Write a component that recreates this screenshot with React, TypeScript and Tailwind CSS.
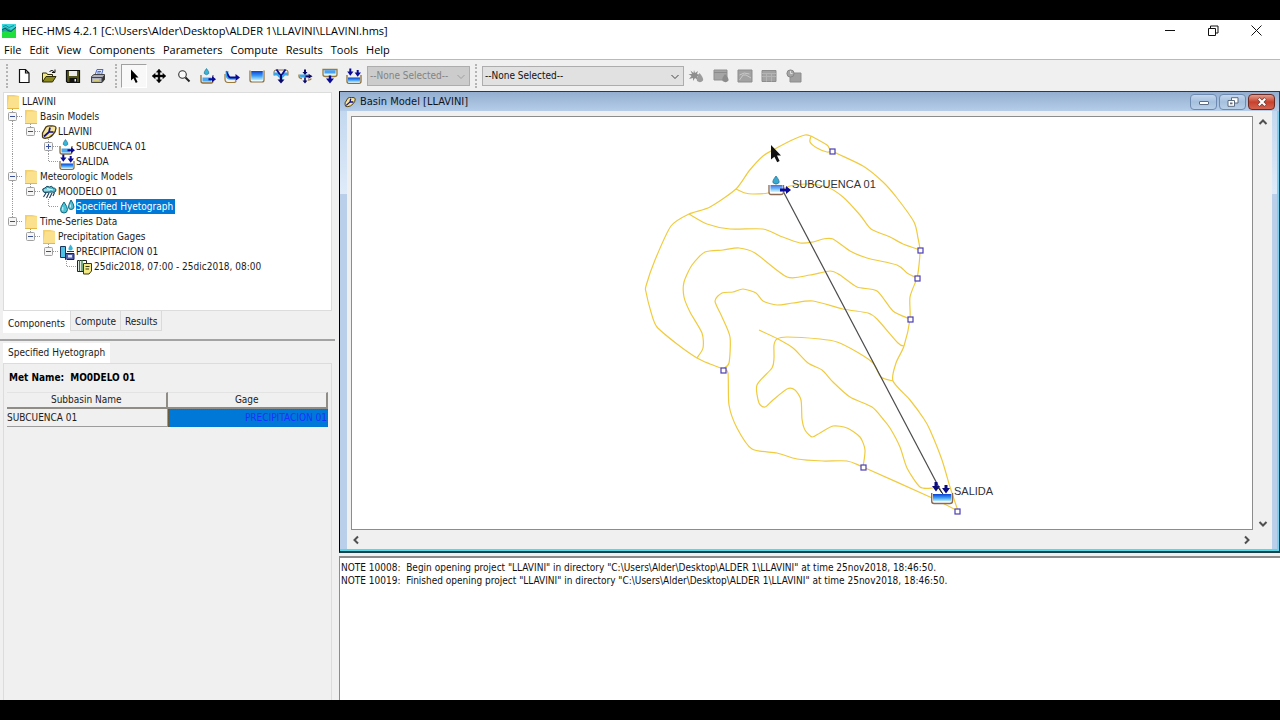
import type { ReactNode } from "react";

type Point = [number, number];

/* ---------- icons ---------- */

function Svg({ children, className = "h-4 w-4" }: { children: ReactNode; className?: string }) {
  return (
    <svg viewBox="0 0 16 16" className={className + " shrink-0"} aria-hidden="true">
      {children}
    </svg>
  );
}

function SubbasinGlyph() {
  return (
    <>
      <path d="M1 7V13Q1 15 3 15H11.500Q13 15 13 13V7" fill="none" stroke="#8a6d3b" strokeWidth="1.300" />
      <path d="M2.500 9.500H11.500V13.500H2.500Z" fill="#4aa8f0" />
      <path d="M6.500 0.500Q9.500 4 8.800 5.500Q6.500 8 4.200 5.500Q3.600 4 6.500 0.500Z" fill="#38b6d8" stroke="#1b6f96" strokeWidth="0.600" />
      <path d="M8.500 10.200H12V8L16 11.200L12 14.300V12.200H8.500Z" fill="#0a0a96" />
    </>
  );
}

function SinkGlyph() {
  return (
    <>
      <path d="M1 7V13.500Q1 15.300 3 15.300H13Q15 15.300 15 13.500V7" fill="none" stroke="#8a6d3b" strokeWidth="1.300" />
      <path d="M2 9.500H14V14.500H2Z" fill="url(#water)" />
      <path d="M3.300 0.500H5.300V3.500H7.500L4.300 7.800L1.200 3.500H3.300ZM10.700 2H12.700V4.500H15L11.700 8.800L8.600 4.500H10.700Z" fill="#0a0a96" />
    </>
  );
}

function Folder() {
  return (
    <Svg>
      <path d="M2 1H9L14 2V15H2Z" fill="#f2d06c" />
      <path d="M4 2.500H14V15H2Z" fill="#fbe08d" />
      <path d="M2 14.500H14" stroke="#e3b94b" />
    </Svg>
  );
}

function BasinModelIcon({ className }: { className?: string }) {
  return (
    <Svg className={className}>
      <path d="M1.500 9L5 3Q7 1.500 10 2Q15 1.500 15 4Q14.800 8 12 10.500Q9 14 5 14.200Q1 14.500 1.500 11.500Z" fill="#f7e69a" stroke="#4b3a12" strokeWidth="1.300" />
      <path d="M3 12.500L8 8L9 3.500M8 8L12.500 8" fill="none" stroke="#10108c" strokeWidth="1.700" />
    </Svg>
  );
}

function StormIcon() {
  return (
    <Svg>
      <path d="M2 7Q0.500 4.500 4 4Q5.500 1 8.500 3Q11 1 12 4Q16 4 14.500 7.500Q13 9 11 8L4 8.500Q2.500 8.500 2 7Z" fill="#4fb7c9" stroke="#17495e" />
      <path d="M3 6H9M6 4.500L12 6" stroke="#e4fbff" />
      <path d="M5 9L2.500 13M8 9L5.500 14M11 9L8.500 14M13.500 8.500L12 12" stroke="#17375e" strokeWidth="1.100" />
    </Svg>
  );
}

function DropsIcon() {
  return (
    <Svg>
      <path d="M5 3Q8.500 8 8.500 10.500Q8.300 14 5 14Q1.500 14 1.500 10.500Q1.500 8 5 3Z" fill="#4fc3d6" stroke="#156a80" />
      <path d="M12 1Q15 5.500 15 8Q14.700 10.500 12 10.500Q9.500 10.500 9.500 8Q9.500 5.500 12 1Z" fill="#4fc3d6" stroke="#156a80" />
      <path d="M3.800 8V11.500M11.300 5.500V8.500" stroke="#e4fbff" />
    </Svg>
  );
}

function GageIcon() {
  return (
    <Svg>
      <path d="M1.500 2.500H6.500V13.500H1.500Z" fill="#4fc3e6" stroke="#17375e" />
      <path d="M6.500 9.500H15V15.500H6.500Z" fill="#5560a8" stroke="#17205e" />
      <path d="M9 11H13V13.500H9Z" fill="#dfe6ff" />
      <path d="M11.500 0.500Q14.500 4 13.500 5.500Q11.500 7.500 9.500 5.500Q9 4 11.500 0.500Z" fill="#38b6d8" />
      <path d="M8 7.500H15" stroke="#17375e" />
    </Svg>
  );
}

function TimeWindowIcon() {
  return (
    <Svg>
      <path d="M0.500 1.500H9.500V12.500H0.500Z" fill="#ffffff" stroke="#222" />
      <path d="M2.500 1V12M5 1V12" stroke="#2f7d3a" strokeWidth="1.300" />
      <path d="M6.500 4.500H14.500V12L12 15H6.500Z" fill="#f3ea86" stroke="#3b3710" />
      <path d="M8.500 7.500H12.500M8.500 10H12" stroke="#3b3710" />
    </Svg>
  );
}

const toolIcons: Record<string, ReactNode> = {
  New: <path d="M3.500 1.500H9.500L13 5V14.500H3.500ZM9.500 1.500V5H13" fill="#fff" stroke="#111" strokeWidth="1.200" />,
  Open: (
    <>
      <path d="M1.500 14V5H5.500L6.500 6.500H11.500V9" fill="#f3ea86" stroke="#2d2b08" />
      <path d="M1.500 14L5 8.500H15L11.500 14Z" fill="#8d8a1f" stroke="#2d2b08" />
      <path d="M8.500 3.500Q11 1 13.500 4M14 1.500V4.500H11" fill="none" stroke="#111" />
    </>
  ),
  Save: (
    <>
      <path d="M1.500 2.500H14.500V14.500H2.500L1.500 13.500Z" fill="#55561c" stroke="#111" strokeWidth="1.200" />
      <path d="M4 3H12V8H4Z" fill="#ececec" />
      <path d="M4.500 10H12V14H4.500Z" fill="#111" />
      <path d="M9.500 11H11V13.500H9.500Z" fill="#ececec" />
    </>
  ),
  Print: (
    <>
      <path d="M5 7L7 1.500H13L11.500 7Z" fill="#dfe8ff" stroke="#4f6ac0" />
      <path d="M1.500 8.500L4 6.500H14.500V11.500L12 14.500H1.500Z" fill="#aeb0bd" stroke="#444" />
      <path d="M12 9.500L14.500 7V11.500L12 14.500Z" fill="#333" />
      <path d="M1.500 9.500H12V14" fill="none" stroke="#444" />
      <path d="M3 12H9" stroke="#e6d94d" strokeWidth="1.300" />
      <path d="M7.500 3.500H11M7 5H10.500" stroke="#4f70c7" />
    </>
  ),
  Select: <path d="M5 1.500V12.500L7.500 10.300L9.800 15L11.600 14.100L9.400 9.600H12.500Z" fill="#000" />,
  Pan: <path d="M8 1L10.700 4.200H8.900V7.100H11.800V5.300L15 8L11.800 10.700V8.900H8.900V11.800H10.700L8 15L5.300 11.800H7.100V8.900H4.200V10.700L1 8L4.200 5.300V7.100H7.100V4.200H5.300Z" fill="#000" stroke="#000" strokeWidth="0.400" />,
  Zoom: (
    <>
      <circle cx="6.500" cy="6.500" r="3.800" fill="#fafafa" stroke="#333" strokeWidth="1.100" />
      <path d="M9.500 9.500L13.500 13.500" stroke="#222" strokeWidth="2" />
    </>
  ),
  Subbasin: <SubbasinGlyph />,
  Reach: (
    <>
      <path d="M1 6V11Q1 14.500 4 14.500H9.500Q12 14.500 12 13" fill="none" stroke="#9a7b3c" strokeWidth="1.200" />
      <path d="M3 3V7.500Q3.500 10.500 7.500 10.300H11" fill="none" stroke="#38a6e8" strokeWidth="2.800" />
      <path d="M2.500 2.500L6 8.500H11.500V6L16 9.500L11.500 13V10.500H6Q2.500 9 2.500 2.500Z" fill="#0a0a96" />
    </>
  ),
  Reservoir: (
    <>
      <path d="M1 2.500V12Q1 14 3 14H13Q15 14 15 12V2.500" fill="#fff" stroke="#8a6d3b" strokeWidth="1.200" />
      <path d="M2.200 3H13.800V12.500H2.200Z" fill="url(#water)" />
    </>
  ),
  Junction: (
    <>
      <path d="M1 7.500V4Q1 2 3 2H13Q15 2 15 4V7.500" fill="none" stroke="#8a6d3b" />
      <path d="M1 4.500H5L8 7.500L11 4.500H15V7.500H12L9.500 10V12H6.500V10L4 7.500H1Z" fill="#38a6e8" />
      <path d="M3.500 1.500L7 6.500M12.500 1.500L9 6.500" stroke="#0a0a96" strokeWidth="1.800" />
      <path d="M7 6H9V11.500H11.500L8 15.500L4.500 11.500H7Z" fill="#0a0a66" />
    </>
  ),
  Diversion: (
    <>
      <path d="M2 6.500V8Q2 10.500 5 10.500M14 10.500Q14 12 11 12" fill="none" stroke="#9a7b3c" strokeWidth="1.300" />
      <path d="M2.500 6.500H11V9.500H3.500Z" fill="#38a6e8" />
      <path d="M7 1.500H9V4L10.500 4L8 7L5.500 4H7ZM11.500 5.800L15.500 8.300L11.500 10.800V9.200H8.500V7.500H11.500ZM7.200 9.500H8.800V12.500H10.500L8 15.500L5.500 12.500H7.200Z" fill="#0a0a66" />
    </>
  ),
  Source: (
    <>
      <path d="M1 1.500V6.500Q1 8.500 3.500 8.500H12.500Q15 8.500 15 6.500V1.500Z" fill="#d8f4ff" stroke="#9a7b3c" strokeWidth="1.300" />
      <path d="M2.500 2.200H13.500V5.500H2.500Z" fill="#4aa0f2" />
      <path d="M6.800 7.500H9.200V10.500H12L8 15.500L4 10.500H6.800Z" fill="#0a0a96" />
    </>
  ),
  Sink: <SinkGlyph />,
};

const resultIcons: Record<string, ReactNode> = {
  "Compute run": (
    <>
      <path d="M6 2L7 5L10 3L9 6L12 7L9 8.500L10 12L7 10L5 13V10L1 11L3.500 8L0.500 6L4 6L2.500 2.500L5.500 5Z" fill="#8f8f8f" />
      <path d="M11.500 5Q16 10 15 12.500Q12.500 15.500 9 13Q8 10 11.500 5Z" fill="#9c9c9c" />
    </>
  ),
  "Global summary": (
    <>
      <path d="M1 2H14V12H1Z" fill="#a5a5a5" stroke="#8f8f8f" />
      <path d="M1 4.500H14" stroke="#8b8b8b" />
      <path d="M12 6Q16 10 15.500 12.500Q13 15.500 9.500 13Q8.500 10 12 6Z" fill="#8c8c8c" />
    </>
  ),
  "Summary graph": (
    <>
      <path d="M1 2H15V14H1Z" fill="#a2a2a2" stroke="#8d8d8d" />
      <path d="M2.500 12L6 7H9L14 10M2.500 7Q7 3.500 12.500 6" fill="none" stroke="#c8c8c8" />
    </>
  ),
  "Time-series table": (
    <>
      <path d="M1 2.500H15V13.500H1Z" fill="#a2a2a2" stroke="#8d8d8d" />
      <path d="M1 5.500H15M1 8.500H15M5.500 5V13.500M10.500 5V13.500" stroke="#b4b4b4" />
    </>
  ),
  "Element table": (
    <>
      <path d="M4 5H15V14H4Z" fill="#a0a0a0" stroke="#8d8d8d" />
      <circle cx="4.500" cy="5.500" r="3.600" fill="#a6a6a6" stroke="#878787" />
      <path d="M4.500 3V5.500H6.500" fill="none" stroke="#ddd" />
    </>
  ),
};

function Chevron({ className, weight = 2 }: { className: string; weight?: number }) {
  return (
    <svg viewBox="0 0 10 10" className={className} aria-hidden="true">
      <path d="M1.500 3L5 6.500L8.500 3" fill="none" stroke="currentColor" strokeWidth={weight} />
    </svg>
  );
}

/* ---------- tool bar ---------- */

function Grip() {
  return <span className="block h-6 w-0 border-l-2 border-dotted border-[#b4b4b4]" />;
}

function Picker({ label, disabled, className }: { label: string; disabled?: boolean; className: string }) {
  return (
    <div className={"relative " + className}>
      <select
        aria-label={label}
        disabled={disabled}
        className="block h-5 w-full appearance-none border border-[#adadad] bg-[#e1e1e1] pl-0.5 text-[10px] leading-4 text-[#111] disabled:bg-[#cccccc] disabled:text-[#838383] disabled:opacity-100"
      >
        <option>--None Selected--</option>
      </select>
      <Chevron
        weight={1}
        className={"pointer-events-none absolute right-1 top-1.5 h-2.5 w-2.5 " + (disabled ? "text-[#a0a0a0]" : "text-[#444444]")}
      />
    </div>
  );
}

function ToolBar() {
  const names = Object.keys(toolIcons);
  return (
    <div className="flex h-8 items-center border-t border-[#b9b9b9] bg-[#f0f0f0] pl-1.5">
      <Grip />
      <div className="ml-1 flex w-[98px]">
        {names.slice(0, 4).map((name) => (
          <button key={name} aria-label={name} className="flex h-6 flex-1 items-center justify-center">
            <Svg>{toolIcons[name]}</Svg>
          </button>
        ))}
      </div>
      <div className="ml-[5px]">
        <Grip />
      </div>
      <div className="ml-1 mr-px flex w-[245px]">
        {names.slice(4).map((name) => (
          <button
            key={name}
            aria-label={name}
            className={
              "flex h-6 flex-1 items-center justify-center " +
              (name === "Select" ? "border border-b-white border-l-[#a0a0a0] border-r-white border-t-[#a0a0a0] bg-[#f8f8f8]" : "")
            }
          >
            <Svg>{toolIcons[name]}</Svg>
          </button>
        ))}
      </div>
      <Picker label="Zoom layer" disabled className="w-[103px]" />
      <div className="mx-[5px]">
        <Grip />
      </div>
      <Picker label="Simulation run" className="w-[202px]" />
      <div className="flex w-[122px]">
        {Object.keys(resultIcons).map((name) => (
          <button key={name} aria-label={name} disabled className="flex h-6 flex-1 items-center justify-center">
            <Svg>{resultIcons[name]}</Svg>
          </button>
        ))}
      </div>
    </div>
  );
}

/* ---------- component tree ---------- */

type Guide = "blank" | "line" | "tee+" | "tee-" | "end" | "end-";

function GuideCell({ kind }: { kind: Guide }) {
  const box = kind.endsWith("+") || kind.endsWith("-");
  const elbow = kind.startsWith("tee") || kind.startsWith("end");
  return (
    <svg viewBox="0 0 18 15" className="h-[15px] w-[18px] shrink-0" aria-hidden="true">
      {kind !== "blank" && (
        <path d={kind.startsWith("end") ? "M8.500 0V8" : "M8.500 0V15"} stroke="#9a9a9a" strokeDasharray="1 1" />
      )}
      {elbow && <path d="M9 7.500H18" stroke="#9a9a9a" strokeDasharray="1 1" />}
      {box && (
        <>
          <rect x="4.500" y="3.500" width="8" height="8" rx="1" fill="#f6f6f6" stroke="#a0a0a0" />
          <path d={kind.endsWith("+") ? "M6 7.500H11M8.500 5V10" : "M6 7.500H11"} stroke="#3a4f9a" />
        </>
      )}
    </svg>
  );
}

const tree: { label: string; guides: Guide[]; icon: ReactNode; selected?: boolean }[] = [
  { label: "LLAVINI", guides: [], icon: <Folder /> },
  { label: "Basin Models", guides: ["tee-"], icon: <Folder /> },
  { label: "LLAVINI", guides: ["line", "end-"], icon: <BasinModelIcon /> },
  { label: "SUBCUENCA 01", guides: ["line", "blank", "tee+"], icon: <Svg><SubbasinGlyph /></Svg> },
  { label: "SALIDA", guides: ["line", "blank", "end"], icon: <Svg><SinkGlyph /></Svg> },
  { label: "Meteorologic Models", guides: ["tee-"], icon: <Folder /> },
  { label: "MO0DELO 01", guides: ["line", "end-"], icon: <StormIcon /> },
  { label: "Specified Hyetograph", guides: ["line", "blank", "end"], icon: <DropsIcon />, selected: true },
  { label: "Time-Series Data", guides: ["end-"], icon: <Folder /> },
  { label: "Precipitation Gages", guides: ["blank", "end-"], icon: <Folder /> },
  { label: "PRECIPITACION 01", guides: ["blank", "blank", "end-"], icon: <GageIcon /> },
  { label: "25dic2018, 07:00 - 25dic2018, 08:00", guides: ["blank", "blank", "blank", "end"], icon: <TimeWindowIcon /> },
];

function ComponentTree() {
  return (
    <ul className="h-[219px] border border-[#dcdcdc] bg-white pt-px">
      {tree.map((row, i) => (
        <li key={i} className="flex h-[15px] items-center">
          {row.guides.map((kind, g) => (
            <GuideCell key={g} kind={kind} />
          ))}
          <span className="flex w-[18px] shrink-0 justify-center">{row.icon}</span>
          <span className={"whitespace-nowrap leading-[15px] " + (row.selected ? "bg-[#0078d7] pr-0.5 text-white" : "")}>{row.label}</span>
        </li>
      ))}
    </ul>
  );
}

function LeftPane() {
  return (
    <div className="flex w-[335px] shrink-0 flex-col">
      <div className="px-[3px] pt-px">
        <ComponentTree />
        <div className="flex items-start" role="tablist">
          <button role="tab" aria-selected="true" className="h-[22px] bg-white px-[5px] pt-1">Components</button>
          <button role="tab" aria-selected="false" className="h-5 border border-t-0 border-[#dadada] px-1 pt-0.5">Compute</button>
          <button role="tab" aria-selected="false" className="h-5 border border-l-0 border-t-0 border-[#dadada] px-1 pt-0.5">Results</button>
        </div>
      </div>
      <div className="mt-1.5 h-0.5 bg-[#a3a3a3]" />
      <div className="flex flex-1 flex-col px-[3px] pt-0.5">
        <div className="flex" role="tablist">
          <button role="tab" aria-selected="true" className="h-5 bg-white px-[5px]">Specified Hyetograph</button>
        </div>
        <div className="flex-1 border border-b-0 border-[#dcdcdc] px-[3px]">
          <p className="flex h-7 items-center gap-1.5 px-0.5 font-bold text-black">
            <span>Met Name:</span>
            <span>MO0DELO 01</span>
          </p>
          <table className="w-[321px] table-fixed border-separate border-spacing-0">
            <thead>
              <tr>
                <th className="border-b-2 border-r-2 border-t border-[#8f8d86] border-t-[#e3e3e3] p-0 font-normal leading-[14px]">Subbasin Name</th>
                <th className="border-b-2 border-r-2 border-t border-[#8f8d86] border-t-[#e3e3e3] p-0 font-normal leading-[14px]">Gage</th>
              </tr>
            </thead>
            <tbody>
              <tr>
                <td className="border-b border-r border-[#9c9c9c] p-0 leading-4">SUBCUENCA 01</td>
                <td className="border border-dotted border-[#6b5a3a] bg-[#0078d7] p-0 text-right leading-4 text-[#1b2fff]">PRECIPITACION 01</td>
              </tr>
            </tbody>
          </table>
        </div>
      </div>
    </div>
  );
}

/* ---------- basin map ---------- */

/* Catmull-Rom spline through the points, written as cubic segments. */
function smooth(points: Point[]): string {
  let d = `M${points[0][0]} ${points[0][1]}`;
  for (let i = 0; i < points.length - 1; i++) {
    const a = points[Math.max(i - 1, 0)];
    const b = points[i];
    const c = points[i + 1];
    const e = points[Math.min(i + 2, points.length - 1)];
    const k = 8;
    d += `C${b[0] + (c[0] - a[0]) / k} ${b[1] + (c[1] - a[1]) / k} ${c[0] - (e[0] - b[0]) / k} ${c[1] - (e[1] - b[1]) / k} ${c[0]} ${c[1]}`;
  }
  return d;
}

const contours: Point[][] = [
  [[811, 136], [805, 135], [790, 141], [773, 150], [763, 156], [749, 171], [736, 189], [710, 207], [689, 214], [671, 226], [655, 260], [646, 286], [646, 292], [651, 312], [657, 327], [677, 344], [697, 358], [710, 364], [723, 369], [728, 373], [729, 405], [737, 428], [752, 449], [777, 453], [797, 459], [823, 461], [847, 461], [863, 467], [930, 497], [958, 511]],
  [[811, 136], [827, 145], [832, 151], [863, 166], [883, 182], [897, 198], [914, 222], [918, 238], [920, 250], [919, 265], [917, 278], [910, 297], [910, 319], [904, 346], [896, 363], [893, 381], [910, 400], [924, 419], [930, 430], [942, 460], [950, 487], [958, 511]],
  [[811, 136], [810, 142], [817, 148], [827, 152], [832, 151]],
  [[736, 189], [745, 193], [753, 194], [768, 193], [790, 186], [807, 184], [827, 187], [843, 197], [860, 215], [871, 229], [890, 237], [903, 244], [920, 250]],
  [[689, 214], [707, 224], [730, 229], [763, 229], [780, 236], [800, 243], [813, 242], [823, 239], [833, 239], [850, 251], [867, 258], [897, 265], [907, 273], [917, 278]],
  [[697, 358], [703, 348], [702, 333], [690, 312], [684, 297], [684, 282], [692, 265], [705, 252], [723, 250], [739, 248], [755, 253], [787, 277], [810, 275], [830, 271], [840, 275], [857, 287], [877, 291], [893, 311], [910, 319]],
  [[723, 369], [729, 363], [730, 337], [722, 317], [715, 301], [722, 293], [733, 292], [743, 289], [756, 293], [763, 301], [777, 305], [793, 303], [813, 301], [843, 309], [868, 313], [877, 319], [898, 343], [904, 346]],
  [[759, 330], [778, 339], [793, 348], [808, 363], [822, 370], [833, 382], [850, 397], [872, 407], [883, 419], [890, 428], [900, 447], [907, 468], [920, 487], [933, 488]],
  [[893, 381], [881, 377], [873, 363], [857, 352], [837, 342], [820, 339], [787, 337], [777, 339], [774, 345], [774, 358], [772, 368], [757, 385], [759, 403], [765, 407], [773, 400], [787, 389], [795, 390], [801, 400], [802, 419], [805, 430], [812, 437], [820, 433], [833, 426], [847, 428], [860, 437], [865, 450], [863, 467]],
];

const handles: Point[] = [[832, 151], [920, 250], [917, 278], [910, 319], [723, 370], [863, 467], [957, 511]];

function BasinMap() {
  return (
    <svg viewBox="352 117 900 412" className="block h-[412px] w-[900px] max-w-none" role="img" aria-label="Basin map">
      <defs>
        <linearGradient id="water" x1="0" y1="0" x2="0" y2="1">
          <stop offset="0" stopColor="#0b3fd0" />
          <stop offset="0.500" stopColor="#3a9cf5" />
          <stop offset="1" stopColor="#c8f4ff" />
        </linearGradient>
      </defs>
      {contours.map((points, i) => (
        <path key={i} d={smooth(points)} fill="none" stroke="#f0cb3e" strokeWidth="1.200" />
      ))}
      {handles.map(([x, y]) => (
        <rect key={x} x={x - 2} y={y - 2} width="5" height="5" fill="#fff" stroke="#4a3fb5" strokeWidth="1.200" />
      ))}
      <path d="M783 191L943 495" stroke="#4a4a4a" strokeWidth="1.200" />
      <g transform="translate(768 176)">
        <path d="M1 9V16Q1 18.500 3 18.500H13Q15.500 18.500 15.500 16V9" fill="#fff" stroke="#8b6a55" strokeWidth="1.300" />
        <path d="M2.500 9H14.500V16H2.500Z" fill="url(#water)" opacity="0.750" />
        <path d="M8 0Q12 5 11 6.800Q8 9.500 5 6.800Q4 5 8 0Z" fill="#38a9cf" stroke="#1b6f96" strokeWidth="0.700" />
        <path d="M12 12.500H18V10L23 14L18 18V15.500H12Z" fill="#0a0a96" />
      </g>
      <g transform="translate(931 481)">
        <path d="M0.700 12V20Q0.700 22.500 3 22.500H19Q21.500 22.500 21.500 20V12" fill="#fff" stroke="#8b6a55" strokeWidth="1.400" />
        <path d="M2 13H20.300V20.500H2Z" fill="url(#water)" />
        <path d="M3.500 1H6.500V5H9L5 10.500L1 5H3.500ZM13.500 4H16.500V7H19L15 12.500L11 7H13.500Z" fill="#0a0a80" />
        <path d="M5 4L12 13" stroke="#222" />
      </g>
      <g fill="#333" className="font-['Liberation_Sans',sans-serif] text-[11px]">
        <text x="792" y="188">SUBCUENCA 01</text>
        <text x="954" y="495">SALIDA</text>
      </g>
      <path d="M771 145V159.500L774.400 156.800L777.200 162.200L779.600 161L777 155.500H781Z" fill="#111" />
    </svg>
  );
}

function FrameButtons() {
  const base = "flex h-4 w-[27px] items-center justify-center rounded-sm border";
  const blue = " border-[#6d8bb0] bg-linear-to-b from-[#c3d6ec] via-[#a5c0de] to-[#b8cfe8]";
  return (
    <div className="flex gap-0.5">
      <button aria-label="Minimize basin window" className={base + blue}>
        <svg viewBox="0 0 12 10" className="h-2.5 w-3"><rect x="1.500" y="4.500" width="9" height="3" rx="0.500" fill="#fff" stroke="#5c6b80" /></svg>
      </button>
      <button aria-label="Restore basin window" className={base + blue}>
        <svg viewBox="0 0 12 10" className="h-2.5 w-3">
          <path d="M4.500 0.700H11V6H4.500Z" fill="#fff" stroke="#5c6b80" />
          <path d="M1 3.500H7.500V9.300H1Z" fill="#fff" stroke="#5c6b80" />
          <path d="M3 5.500H5.500V7.300H3Z" fill="#5c6b80" />
        </svg>
      </button>
      <button aria-label="Close basin window" className={base + " border-[#6b2a23] bg-linear-to-b from-[#e39a8c] via-[#c8402c] to-[#d4644f]"}>
        <svg viewBox="0 0 12 10" className="h-2.5 w-3">
          <path d="M2.500 1.500L9.500 8.500M9.500 1.500L2.500 8.500" stroke="#6b3a35" strokeWidth="3.600" />
          <path d="M2.800 1.800L9.200 8.200M9.200 1.800L2.800 8.200" stroke="#fff" strokeWidth="2.200" />
        </svg>
      </button>
    </div>
  );
}

function BasinWindow() {
  return (
    <section className="flex h-[462px] flex-col border border-b-2 border-[#2c3a42] border-b-[#1f3f48] border-l-black">
      <header className="flex h-[19px] shrink-0 items-center justify-between bg-linear-to-b from-[#93aed0] to-[#b5cde9] pl-1 pr-1 text-[11px]">
        <h1 className="flex items-center gap-1 text-[#10151c]">
          <BasinModelIcon className="h-3 w-3" />
          Basin Model [LLAVINI]
        </h1>
        <FrameButtons />
      </header>
      <div className="flex flex-1 border-b-2 border-r-2 border-[#4fdbe8] border-r-[#7fcfee] bg-[linear-gradient(to_bottom,#c3d8ef_0%,#dfebf9_19%,#b9cfea_19%,#b9cfea_100%)] pl-[7px] pr-[5px]">
        <div className="flex min-w-0 flex-1 flex-col bg-[#f0f0f0] pl-1 pt-[5px]">
          <div className="flex flex-1">
            <div className="min-w-0 flex-1 overflow-hidden border border-[#8c8c8c] bg-white">
              <BasinMap />
            </div>
            <div className="flex w-[19px] flex-col items-center justify-between py-px text-[#505050]">
              <Chevron className="h-2.5 w-2.5 rotate-180" />
              <Chevron className="h-2.5 w-2.5" />
            </div>
          </div>
          <div className="flex h-[19px] items-center justify-between pr-5 text-[#505050]">
            <Chevron className="h-2.5 w-2.5 rotate-90" />
            <Chevron className="h-2.5 w-2.5 -rotate-90" />
          </div>
        </div>
      </div>
    </section>
  );
}

const notes = [
  'NOTE 10008:  Begin opening project "LLAVINI" in directory "C:\\Users\\Alder\\Desktop\\ALDER 1\\LLAVINI" at time 25nov2018, 18:46:50.',
  'NOTE 10019:  Finished opening project "LLAVINI" in directory "C:\\Users\\Alder\\Desktop\\ALDER 1\\LLAVINI" at time 25nov2018, 18:46:50.',
];

/* ---------- window ---------- */

export default function App() {
  return (
    <div className="flex h-screen flex-col bg-black py-5 font-['DejaVu_Sans_Condensed','DejaVu_Sans',sans-serif] text-[10px] leading-4 text-[#1c1c1c]">
      <header className="flex h-[21px] shrink-0 items-center justify-between bg-white pl-0.5 font-['Open_Sans',sans-serif] text-[11px] text-black">
        <div className="flex items-center gap-1.5">
          <svg viewBox="0 0 14 14" className="h-3.5 w-3.5" aria-hidden="true">
            <path d="M0 0H14V14H0Z" fill="#3bd6dc" />
            <path d="M0 5L4 3L9 6L14 3V8H0Z" fill="#1fa39b" />
            <path d="M0 8.500L3 7L8 8.500L11 6L14 5V14H0Z" fill="#1fe03a" />
            <path d="M0 6L3 4L6 6.500L9 7.500L14 3" fill="none" stroke="#0d5960" />
            <path d="M1 2.500L4 1.500L7 3.500L12 1.500" fill="none" stroke="#178f97" />
          </svg>
          <span>HEC-HMS 4.2.1 [C:\Users\Alder\Desktop\ALDER 1\LLAVINI\LLAVINI.hms]</span>
        </div>
        <div className="flex gap-8 pr-[18px]">
          <button aria-label="Minimize">
            <svg viewBox="0 0 11 11" className="h-[11px] w-[11px]"><path d="M0 5.500H10" stroke="#111" /></svg>
          </button>
          <button aria-label="Restore">
            <svg viewBox="0 0 11 11" className="h-[11px] w-[11px]"><path d="M0.500 3.500H7.500V10.500H0.500ZM2.500 3.500V1H10V8H7.500" fill="none" stroke="#111" /></svg>
          </button>
          <button aria-label="Close">
            <svg viewBox="0 0 11 11" className="h-[11px] w-[11px]"><path d="M0.500 0.500L10.500 10.500M10.500 0.500L0.500 10.500" stroke="#111" /></svg>
          </button>
        </div>
      </header>
      <nav className="flex h-[18px] shrink-0 items-center gap-2 bg-white pl-1 font-['Open_Sans',sans-serif] text-[11px] text-black">
        {["File", "Edit", "View", "Components", "Parameters", "Compute", "Results", "Tools", "Help"].map((name) => (
          <button key={name}>{name}</button>
        ))}
      </nav>
      <ToolBar />
      <main className="flex min-h-0 flex-1 bg-[#f0f0f0]">
        <LeftPane />
        <div className="flex min-w-0 flex-1 flex-col pl-1">
          <BasinWindow />
          <div className="mt-[3px] flex-1 whitespace-pre border-l border-t-2 border-[#8c8c8c] bg-white pl-px pt-[3px] leading-[13px] text-[#111]">
            {notes.map((note) => (
              <p key={note}>{note}</p>
            ))}
          </div>
        </div>
      </main>
    </div>
  );
}
